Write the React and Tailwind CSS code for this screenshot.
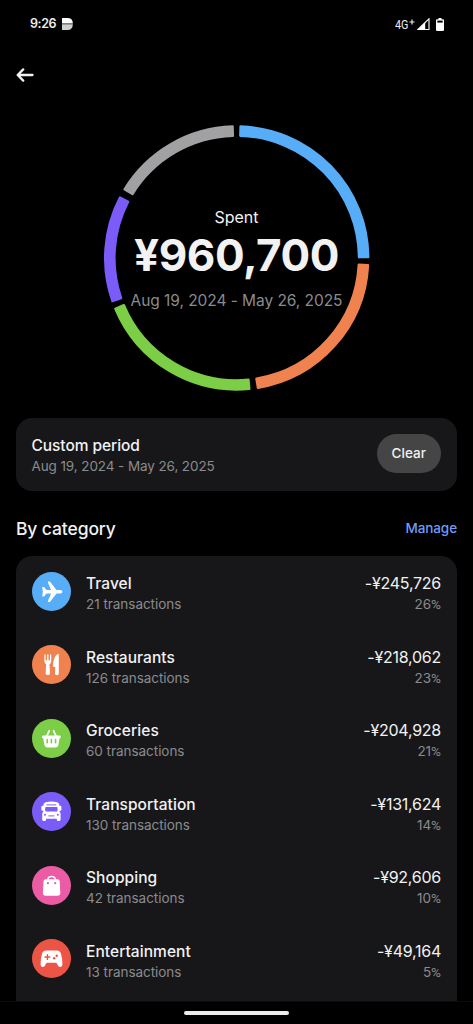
import React from 'react';

const SEGMENTS = [
  { color: '#58adf8', from: 1.2, to: 90.1 },
  { color: '#ef824f', from: 92.6, to: 171.2 },
  { color: '#7bce46', from: 174, to: 247.8 },
  { color: '#7c5cf8', from: 250.4, to: 297.9 },
  { color: '#a1a1a3', from: 301, to: 358.7 },
];

const PlaneIcon = () => (
  <path
    d="M10.2 15.6q-.2-.6.5-.6h1q.5 0 .8.4l2 2.5h4.6l-3.2-7.5q-.3-.9.6-.9h.9q.5 0 .9.5l6.2 7.9h3.7q2.2 0 2.2 1.8t-2.2 1.8h-3.7l-6.2 7.9q-.4.5-.9.5h-.9q-.9 0-.6-.9l3.2-7.5h-4.6l-2 2.5q-.3.4-.8.4h-1q-.7 0-.5-.6l.7-4.1z"
    fill="#fff"
  />
);

const CutleryIcon = () => (
  <g fill="#fff">
    <path d="M12.4 9.8q0-.6.6-.6t.6.6v5.4h1.5V9.8q0-.6.7-.6t.7.6v5.4H18V9.8q0-.6.6-.6t.6.6v6.4q0 2.2-1.7 3l.5 9.2q0 1.6-2.2 1.6t-2.2-1.6l.5-9.2q-1.7-.8-1.7-3z" />
    <path d="M26.8 9.4v19.2q0 1.6-1.9 1.6t-1.9-1.6l.3-6.6h-1.5q-.8 0-.8-.9 0-9.3 4.7-12.2 1.1-.5 1.1.5z" />
  </g>
);

const BasketIcon = () => (
  <g>
    <path d="m14.6 17.4 2.6-5.6M24.2 17.4l-2.6-5.6" stroke="#fff" strokeWidth="1.8" strokeLinecap="round" />
    <path d="M11.4 16.4h16q1.5 0 1.4 1.3-.1 1.6-1.3 1.8l-1.1 6.6q-.4 2.4-2.7 2.4h-8.6q-2.3 0-2.7-2.4l-1.1-6.6q-1.2-.2-1.3-1.8-.1-1.3 1.4-1.3z" fill="#fff" />
    <path d="M15.2 20.6v3.2M19.4 20.6v3.2M23.6 20.6v3.2" stroke="#7bce46" strokeWidth="1.6" strokeLinecap="round" />
  </g>
);

const BusIcon = () => (
  <g>
    <path d="M11.2 23V14q0-2.9 2.4-3.7 5.7-1.5 11.6 0 2.4.8 2.4 3.7v9z" fill="#fff" />
    <rect x="9.4" y="13.8" width="2.6" height="5" rx="1.1" fill="#fff" />
    <rect x="26.8" y="13.8" width="2.6" height="5" rx="1.1" fill="#fff" />
    <path d="M10.2 21.7q0-1.8 1.8-1.8h14.8q1.8 0 1.8 1.8v5.9q0 1.4-1.3 1.4h-1.3q-1.3 0-1.3-1.4v-.8H14.1v.8q0 1.4-1.3 1.4h-1.3q-1.3 0-1.3-1.4z" fill="#fff" />
    <path d="M15 12.9h8.8" stroke="#7c5cf8" strokeWidth="1" strokeLinecap="round" fill="none" />
    <rect x="13.2" y="14.9" width="12.4" height="4.5" rx="1" fill="#7c5cf8" />
    <circle cx="13" cy="22.7" r="1" fill="#7c5cf8" />
    <circle cx="25.8" cy="22.7" r="1" fill="#7c5cf8" />
    <path d="M16.8 23.9h5.2" stroke="#7c5cf8" strokeWidth="1" strokeLinecap="round" />
  </g>
);

const BagIcon = () => (
  <g>
    <path d="M15.8 14.5v-.6q0-3.4 3.8-3.4t3.8 3.4v.6" stroke="#fff" strokeWidth="1.5" fill="none" />
    <path d="M13.8 13.3h11.6q2.1 0 2.3 2l.6 11.5q.1 3-2.8 3H13.7q-2.9 0-2.8-3l.6-11.5q.2-2 2.3-2z" fill="#fff" />
    <circle cx="15.9" cy="17.2" r="1.1" fill="#eb5ca4" />
    <circle cx="23.2" cy="17.2" r="1.1" fill="#eb5ca4" />
  </g>
);

const GamepadIcon = () => (
  <g>
    <path d="M14.2 11.4h10.6q3.2 0 4.1 3 1.6 5.4 1.5 10.6 0 2.9-2.2 2.9-1.6 0-2.4-1.7l-.7-1.5q-.5-1-1.6-1h-8q-1.1 0-1.6 1l-.7 1.5q-.8 1.7-2.4 1.7-2.2 0-2.2-2.9-.1-5.2 1.5-10.6.9-3 4.1-3z" fill="#fff" />
    <path d="M15.4 15.6v4.8M13 18h4.8" stroke="#ec5545" strokeWidth="1.4" strokeLinecap="round" />
    <circle cx="22.2" cy="19.3" r="1.2" fill="#ec5545" />
    <circle cx="24.7" cy="16.8" r="1.2" fill="#ec5545" />
  </g>
);

const CATEGORIES = [
  { name: 'Travel', count: 21, amount: '-¥245,726', share: 26, bg: 'bg-[#58adf8]', Icon: PlaneIcon },
  { name: 'Restaurants', count: 126, amount: '-¥218,062', share: 23, bg: 'bg-[#ef824f]', Icon: CutleryIcon },
  { name: 'Groceries', count: 60, amount: '-¥204,928', share: 21, bg: 'bg-[#7bce46]', Icon: BasketIcon },
  { name: 'Transportation', count: 130, amount: '-¥131,624', share: 14, bg: 'bg-[#7c5cf8]', Icon: BusIcon },
  { name: 'Shopping', count: 42, amount: '-¥92,606', share: 10, bg: 'bg-[#eb5ca4]', Icon: BagIcon },
  { name: 'Entertainment', count: 13, amount: '-¥49,164', share: 5, bg: 'bg-[#ec5545]', Icon: GamepadIcon },
];

// ring slice between two angles, clockwise from 12 o'clock
const slicePath = (from, to) => {
  const point = (r, deg) => {
    const a = (deg * Math.PI) / 180;
    return `${(132.7 + r * Math.sin(a)).toFixed(2)} ${(133 - r * Math.cos(a)).toFixed(2)}`;
  };
  const inset = 0.5;
  return `M${point(131.5, from + inset)}A131.5 131.5 0 0 1 ${point(131.5, to - inset)}L${point(122.3, to - inset)}A122.3 122.3 0 0 0 ${point(122.3, from + inset)}Z`;
};

const StatusBar = () => (
  <div className="flex h-12 shrink-0 items-center justify-between pl-[30px] pr-[29px]">
    <div className="flex items-center gap-[6px]">
      <span className="w-[26px] whitespace-nowrap text-[12.5px] font-semibold leading-4 tracking-[-0.4px] text-[#ececec]">9:26</span>
      <svg width="11" height="12" viewBox="0 0 11 12">
        <path d="M0 0h5.5Q10.6 0 10.9 5.4H0z" fill="#fff" />
        <path d="M0 6.2h10.9Q10.6 12 5.5 12H0z" fill="#cfcfcf" />
      </svg>
    </div>
    <div className="flex items-center">
      <span className="w-[13px] origin-left scale-x-[.8] font-[Roboto] text-[13.5px] leading-4 text-[#ececec]">4G</span>
      <svg className="mb-[5px] ml-[1px]" width="6" height="6" viewBox="0 0 6 6">
        <path d="M3 .5v5M.5 3h5" stroke="#ececec" strokeWidth="1.2" />
      </svg>
      <svg className="ml-[2px]" width="13" height="12" viewBox="0 0 13 12">
        <path d="M12 .8V11.5H.9z" fill="none" stroke="#ececec" strokeWidth="1.2" />
        <path d="M.5 12 8.2 4.2V12z" fill="#fff" />
      </svg>
      <svg className="ml-[6px]" width="8" height="13" viewBox="0 0 8 13">
        <path d="M2.5 0h3v1.2h1.3q1.2 0 1.2 1.2v9.4Q8 13 6.8 13H1.2Q0 13 0 11.8V2.4q0-1.2 1.2-1.2h1.3z" fill="#fff" />
        <path d="M1.3 2.6h5.4v2H1.3z" fill="#000" />
      </svg>
    </div>
  </div>
);

const SpentRing = () => (
  <div className="mx-auto mt-[25px] grid size-[266px] shrink-0 place-items-center">
    <svg className="col-start-1 row-start-1" width="266" height="266" viewBox="0 0 266 266">
      {SEGMENTS.map((s) => (
        <path key={s.color} d={slicePath(s.from, s.to)} fill={s.color} stroke={s.color} strokeWidth="2.4" strokeLinejoin="round" />
      ))}
    </svg>
    <div className="col-start-1 row-start-1 flex flex-col items-center whitespace-nowrap pt-px">
      <div className="text-[16px] leading-5">Spent</div>
      <div className="mt-[2px] text-[44px] font-bold leading-[52px] tracking-[-0.45px]">¥960,700</div>
      <div className="mt-[9px] text-[15.5px] leading-[21px] tracking-[-0.06px] text-[#8b8b8d]">Aug 19, 2024 - May 26, 2025</div>
    </div>
  </div>
);

const CategoryRow = ({ item }) => (
  <div className="flex h-[73.5px] items-start pl-[15.5px] pr-4 pt-[15.5px]">
    <div className={`size-[39px] shrink-0 overflow-hidden rounded-full ${item.bg}`}>
      <svg width="39" height="39" viewBox="0 0 39 39" fill="none">
        <item.Icon />
      </svg>
    </div>
    <div className="ml-[15.5px] flex-1 pt-[0.5px]">
      <div className="text-[15.5px] font-medium leading-[23px] tracking-[0.06px]">{item.name}</div>
      <div className="text-[13.5px] leading-[19px] tracking-[-0.04px] text-[#8b8b8d]">{item.count} transactions</div>
    </div>
    <div className="pt-[0.5px] text-right">
      <div className="text-[16px] leading-[22px] tracking-[-0.25px]">{item.amount}</div>
      <div className="text-[13.5px] leading-[21px] text-[#8b8b8d]">
        {item.share}
        <span className="font-[Roboto]">%</span>
      </div>
    </div>
  </div>
);

const App = () => (
  <div className="flex h-[1024px] w-[473px] flex-col overflow-hidden bg-black font-[Inter,sans-serif] text-[#f2f2f2]">
    <StatusBar />
    <div className="flex h-[52px] shrink-0 items-center pl-[16px] pt-px">
      <svg width="18" height="14" viewBox="0 0 18 14" fill="none" stroke="#f2f2f2" strokeWidth="2.3" strokeLinecap="round" strokeLinejoin="round">
        <path d="M16.5 7H1.8M7.2 1.4 1.7 7l5.5 5.6" />
      </svg>
    </div>

    <SpentRing />

    <div className="mx-4 mt-[27px] flex h-[73px] shrink-0 items-center justify-between rounded-[16px] bg-[#17171a] pl-[15.5px] pr-4">
      <div className="pt-[2px]">
        <div className="text-[15.5px] font-medium leading-[21px] tracking-[-0.06px]">Custom period</div>
        <div className="text-[13.5px] leading-5 tracking-[-0.1px] text-[#8b8b8d]">Aug 19, 2024 - May 26, 2025</div>
      </div>
      <button className="mb-[3px] h-[39px] w-[64.5px] rounded-full bg-[#454545] text-[13.5px] font-medium">Clear</button>
    </div>

    <div className="mx-4 flex h-[65px] shrink-0 items-center justify-between pt-[10px]">
      <h2 className="text-[17.5px] font-medium leading-6 tracking-[-0.12px]">By category</h2>
      <span className="mb-px text-[13.5px] font-medium leading-6 tracking-[-0.08px] text-[#709cf8]">Manage</span>
    </div>

    <div className="mx-4 min-h-0 flex-1 overflow-hidden rounded-t-[16px] bg-[#17171a]">
      {CATEGORIES.map((item) => (
        <CategoryRow key={item.name} item={item} />
      ))}
    </div>

    <div className="flex h-[23px] shrink-0 justify-center border-t border-[#0b0b0b] pt-[9px]">
      <div className="h-[4px] w-[105px] rounded-full bg-[#ececec]" />
    </div>
  </div>
);

export default App;
